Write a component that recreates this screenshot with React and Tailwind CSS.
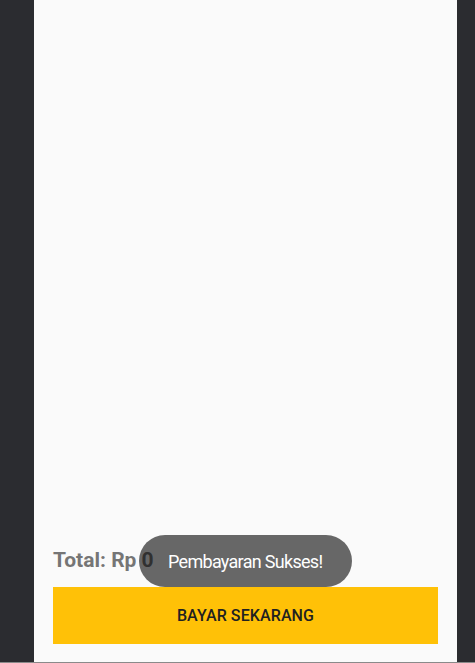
export default function App() {
  return (
    <div className="w-[475px] h-[663px] bg-[#2b2c30] flex flex-col overflow-hidden" style={{ fontFamily: "Roboto, sans-serif" }}>
      <div className="flex flex-1 min-h-0">
        <div className="w-[34px]" />
        <div className="w-[423px] bg-[#fafafa] flex flex-col justify-end pl-[19px] pr-[19px] pb-[18px] relative">
          <div className="text-[21px] font-bold text-[#757575] leading-none mb-[16px]">Total: Rp 0</div>
          <div className="h-[57px] w-[385px] bg-[#ffc107] flex items-center justify-center text-[16px] font-medium text-[#212121] tracking-[0.1px]">
            BAYAR SEKARANG
          </div>
          <div className="absolute left-[105px] top-[535px] w-[213px] h-[52px] rounded-full bg-[rgba(0,0,0,0.59)] flex items-center pl-[29px] text-white text-[18px] tracking-[-0.7px]">
            Pembayaran Sukses!
          </div>
        </div>
        <div className="flex-1" />
      </div>
      <div className="h-px bg-[#8a8a8a]" />
    </div>
  );
}
